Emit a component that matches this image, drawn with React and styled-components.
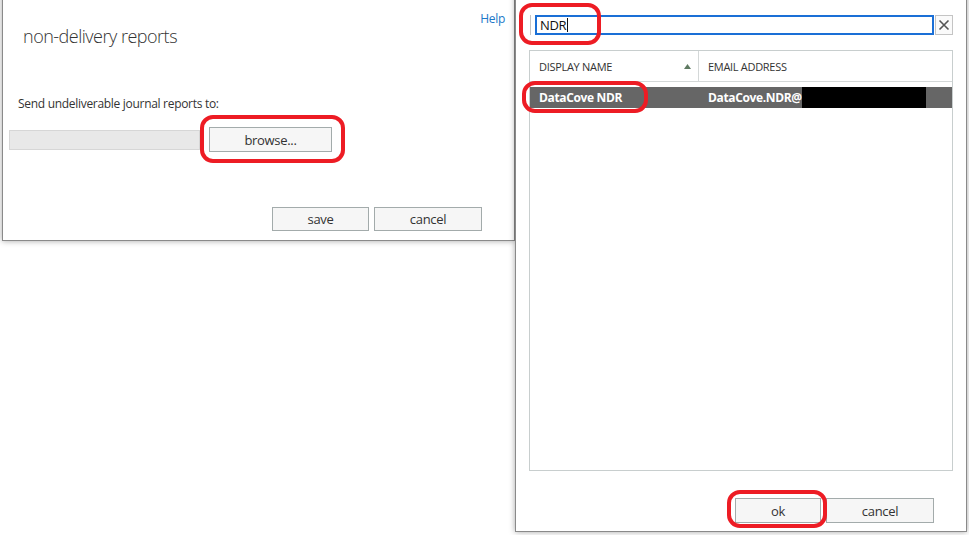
import React from "react";
import styled, { createGlobalStyle } from "styled-components";

const GlobalStyle = createGlobalStyle`
  html, body {
    margin: 0;
    padding: 0;
    background: #fff;
  }
  body {
    font-family: "Segoe UI", "Open Sans", "Liberation Sans", sans-serif;
    letter-spacing: -0.3px;
    color: #333;
  }
`;

const Desktop = styled.div`
  position: relative;
  width: 969px;
  height: 535px;
  overflow: hidden;
  background: #fff;
`;

const Window = styled.div`
  position: absolute;
  left: ${(p) => p.$left}px;
  top: ${(p) => p.$top}px;
  width: ${(p) => p.$width}px;
  height: ${(p) => p.$height}px;
  box-sizing: border-box;
  background: #fff;
  border: 1px solid #8a8a8a;
  box-shadow: 0 0 6px rgba(0, 0, 0, 0.35);
  display: flex;
  flex-direction: column;
`;

const HelpLink = styled.a`
  align-self: flex-end;
  margin: 20px 9px 0 0;
  font-size: 12px;
  line-height: 16px;
  color: #1b78c8;
  text-decoration: none;
  cursor: pointer;
`;

const Title = styled.h1`
  margin: -3px 0 0 20px;
  font-size: 18px;
  line-height: 24px;
  font-weight: 300;
  letter-spacing: -0.5px;
  color: #333;
`;

const FieldLabel = styled.div`
  margin: 48px 0 0 15px;
  font-size: 12px;
  line-height: 16px;
  color: #333;
`;

const PickerRow = styled.div`
  display: flex;
  align-items: center;
  gap: 9px;
  margin: 15px 0 0 6px;
`;

const ReadonlyInput = styled.div`
  width: 191px;
  height: 20px;
  box-sizing: border-box;
  background: #e8e8e8;
  border: 1px solid #d6d6d6;
`;

const Button = styled.button`
  width: ${(p) => p.$width}px;
  height: ${(p) => p.$height || 24}px;
  box-sizing: border-box;
  padding: 0;
  background: #f6f6f6;
  border: 1px solid #a3abab;
  font-family: inherit;
  font-size: 13px;
  letter-spacing: -0.3px;
  color: #333;
  cursor: pointer;
`;

const Footer = styled.div`
  display: flex;
  justify-content: flex-end;
  gap: 5px;
  margin-top: ${(p) => p.$gap}px;
  padding-right: 32px;
`;

const SearchRow = styled.div`
  display: flex;
  align-items: stretch;
  width: 423px;
  height: 20px;
  margin: 24px 0 0 14px;
  box-sizing: border-box;
  border-left: 1px solid #c4c4c4;
`;

const SearchInput = styled.div`
  flex: 1;
  display: flex;
  align-items: center;
  margin-left: 4px;
  padding-left: 3px;
  box-sizing: border-box;
  border: 2px solid #1a6fd6;
  font-size: 13px;
  color: #111;
`;

const Caret = styled.span`
  display: inline-block;
  width: 1px;
  height: 14px;
  margin-left: 1px;
  background: #111;
`;

const ClearButton = styled.div`
  width: 18px;
  display: flex;
  align-items: center;
  justify-content: center;
  margin-left: 1px;
  box-sizing: border-box;
  border: 1px solid #c4c4c4;
  background: #fafafa;
`;

const ResultList = styled.div`
  width: 424px;
  height: 421px;
  margin: 15px 0 0 13px;
  box-sizing: border-box;
  border: 1px solid #c8cece;
`;

const HeaderRow = styled.div`
  display: flex;
  height: 30px;
  border-bottom: 1px solid #d4d8d8;
`;

const HeaderCell = styled.div`
  display: flex;
  align-items: center;
  width: ${(p) => (p.$width ? `${p.$width}px` : "auto")};
  flex: ${(p) => (p.$width ? "none" : 1)};
  padding: 0 9px;
  box-sizing: border-box;
  font-size: 11px;
  color: #333;
  border-right: ${(p) => (p.$divider ? "1px solid #d4d8d8" : "none")};
`;

const SortArrow = styled.svg`
  margin-left: auto;
  margin-right: -2px;
`;

const ResultRow = styled.div`
  display: flex;
  height: 21px;
  margin-top: 5px;
  background: ${(p) => (p.$selected ? "#666666" : "transparent")};
  color: ${(p) => (p.$selected ? "#fff" : "#333")};
  font-size: 12px;
  font-weight: 700;
  letter-spacing: -0.35px;
`;

const Cell = styled.div`
  display: flex;
  align-items: center;
  width: ${(p) => (p.$width ? `${p.$width}px` : "auto")};
  flex: ${(p) => (p.$width ? "none" : 1)};
  padding-left: 9px;
  box-sizing: border-box;
  white-space: nowrap;
`;

const Redacted = styled.span`
  display: inline-block;
  width: 124px;
  height: 21px;
  background: #000;
`;

const Mark = styled.div`
  position: absolute;
  left: ${(p) => p.$x}px;
  top: ${(p) => p.$y}px;
  width: ${(p) => p.$w}px;
  height: ${(p) => p.$h}px;
  box-sizing: border-box;
  border: 4px solid #ed1c24;
  border-radius: 13px;
  z-index: 5;
  pointer-events: none;
`;

export default function App() {
  return (
    <>
      <GlobalStyle />
      <Desktop>
        <Window $left={2} $top={-10} $width={513} $height={251}>
          <HelpLink>Help</HelpLink>
          <Title>non-delivery reports</Title>
          <FieldLabel>Send undeliverable journal reports to:</FieldLabel>
          <PickerRow>
            <ReadonlyInput />
            <Button $width={123} $height={25}>browse...</Button>
          </PickerRow>
          <Footer $gap={55}>
            <Button $width={97}>save</Button>
            <Button $width={108}>cancel</Button>
          </Footer>
        </Window>

        <Window $left={515} $top={-10} $width={452} $height={542}>
          <SearchRow>
            <SearchInput>
              NDR
              <Caret />
            </SearchInput>
            <ClearButton>
              <svg width="12" height="12" viewBox="0 0 12 12">
                <path d="M1.5 1.5 L10.5 10.5 M10.5 1.5 L1.5 10.5" stroke="#555" strokeWidth="1.6" />
              </svg>
            </ClearButton>
          </SearchRow>
          <ResultList>
            <HeaderRow>
              <HeaderCell $width={169} $divider>
                DISPLAY NAME
                <SortArrow width="7" height="5" viewBox="0 0 7 5">
                  <path d="M3.5 0 L7 5 L0 5 Z" fill="#5f7a62" />
                </SortArrow>
              </HeaderCell>
              <HeaderCell>EMAIL ADDRESS</HeaderCell>
            </HeaderRow>
            <ResultRow $selected>
              <Cell $width={169}>DataCove NDR</Cell>
              <Cell>
                DataCove.NDR@
                <Redacted />
              </Cell>
            </ResultRow>
          </ResultList>
          <Footer $gap={27}>
            <Button $width={86} $height={25}>ok</Button>
            <Button $width={108} $height={25}>cancel</Button>
          </Footer>
        </Window>

        <Mark $x={200} $y={115} $w={145} $h={48} />
        <Mark $x={519} $y={3} $w={82} $h={42} />
        <Mark $x={522} $y={81} $w={126} $h={32} />
        <Mark $x={727} $y={490} $w={100} $h={38} />
      </Desktop>
    </>
  );
}
